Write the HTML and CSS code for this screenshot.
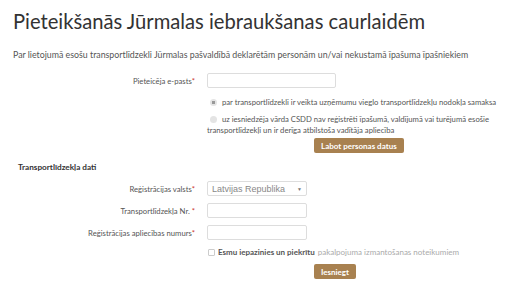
FILE: index.html
```html
<!DOCTYPE html>
<html lang="lv">
<head>
<meta charset="UTF-8">
<meta name="viewport" content="width=device-width, initial-scale=1.0">
<link rel="stylesheet" href="styles.css">
<title>Pieteikšanās Jūrmalas iebraukšanas caurlaidēm</title>
</head>
<body>

<main class="page">

<h1 class="title">Pieteikšanās Jūrmalas iebraukšanas caurlaidēm</h1>

<p class="lead">Par lietojumā esošu transportlīdzekli Jūrmalas pašvaldībā deklarētām personām un/vai nekustamā īpašuma īpašniekiem</p>

<form class="form">

<div class="row">
<label class="label" for="email">Pieteicēja e-pasts<span class="req">*</span></label>
<input type="text" class="inputBox wide" id="email">
</div>

<div class="row tight">
<span></span>
<div class="choices">
<label class="choice"><span class="radio checked"></span> par transportlīdzekli ir veikta uzņēmumu vieglo transportlīdzekļu nodokļa samaksa</label>
<label class="choice"><span class="radio"></span> uz iesniedzēja vārda CSDD nav reģistrēti īpašumā, valdījumā vai turējumā esošie transportlīdzekļi un ir derīga atbilstoša vadītāja apliecība</label>
</div>
</div>

<div class="btnRow">
<button type="button" class="btn">Labot personas datus</button>
</div>

<h2 class="section">Transportlīdzekļa dati</h2>

<div class="row">
<label class="label">Reģistrācijas valsts<span class="req">*</span></label>
<div class="inputBox select">Latvijas Republika <span class="caret">▼</span></div>
</div>

<div class="row">
<label class="label" for="nr">Transportlīdzekļa Nr. <span class="req">*</span></label>
<input type="text" class="inputBox" id="nr">
</div>

<div class="row">
<label class="label" for="cert">Reģistrācijas apliecības numurs<span class="req">*</span></label>
<input type="text" class="inputBox" id="cert">
</div>

<div class="row">
<span></span>
<label class="agree"><span class="checkbox"></span> Esmu iepazinies un piekrītu <a href="#" class="link">pakalpojuma izmantošanas noteikumiem</a></label>
</div>

<div class="btnRow">
<button type="button" class="btn">Iesniegt</button>
</div>

</form>

</main>

</body>
</html>
```

FILE: styles.css
```css
*,*:before,*:after{
margin:0;
padding:0;
box-sizing:border-box;
}

body{
background:#fff;
color:#555;
font-family:Lato, "Open Sans", sans-serif;
font-size:7.7px;
}

.page{
padding:9px 13px;
}

.title{
font-size:20.2px;
font-weight:normal;
color:#333;
line-height:25px;
}

.lead{
margin-top:15px;
font-size:8.8px;
line-height:12px;
color:#555;
}

.form{
margin-top:12px;
}

.row{
display:grid;
grid-template-columns:182px 1fr;
column-gap:12px;
align-items:center;
margin-bottom:7px;
}

.row.tight{
margin-bottom:2px;
}

.label{
text-align:right;
color:#555;
}

.req{
color:#c9302c;
}

.inputBox{
display:block;
width:100px;
height:15px;
border:1px solid #ddd;
border-radius:2px;
background:#fff;
font:inherit;
}

.wide{
width:129px;
}

.select{
display:flex;
align-items:center;
justify-content:space-between;
padding:0 4px;
font-family:"Liberation Sans", Arial, sans-serif;
font-size:9px;
color:#888;
}

.caret{
font-size:5px;
color:#777;
}

.choices{
display:flex;
flex-direction:column;
gap:6px;
margin-top:2px;
}

.choice{
display:block;
line-height:11px;
color:#555;
}

.radio{
display:inline-block;
width:7px;
height:7px;
margin:0 3px 0 3px;
border-radius:50%;
background:#e4e4e4;
vertical-align:-1px;
}

.radio.checked{
background:radial-gradient(circle, #999 0 1.5px, #e4e4e4 1.8px);
}

.btnRow{
display:flex;
justify-content:flex-start;
padding-left:301px;
margin:0 0 8px;
}

.btn{
padding:0 7px;
height:15px;
border:none;
border-radius:2px;
background:#a88150;
color:#fff;
font-family:inherit;
font-size:8px;
font-weight:bold;
}

.section{
margin:9px 0 9px 5px;
font-size:8.2px;
font-weight:bold;
color:#333;
}

.agree{
display:flex;
align-items:center;
gap:3px;
color:#555;
font-size:8px;
font-weight:bold;
}

.checkbox{
width:7px;
height:7px;
margin-left:1px;
border:1px solid #ccc;
border-radius:1px;
}

.link{
color:#aaa;
text-decoration:none;
font-weight:normal;
}
```
